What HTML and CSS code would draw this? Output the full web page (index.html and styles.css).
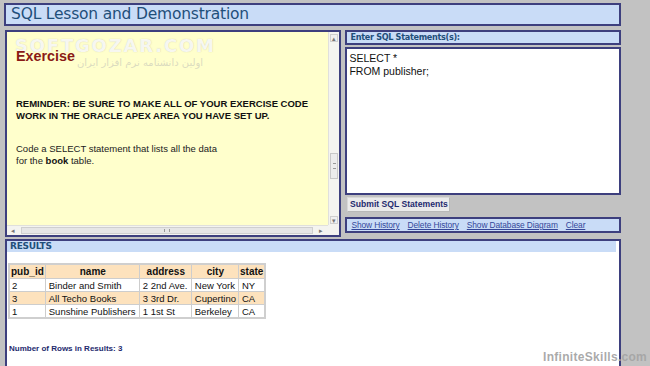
FILE: index.html
```html
<!DOCTYPE html>
<html>
<head>
<meta charset="utf-8">
<link rel="stylesheet" href="styles.css">
</head>
<body>
<div class="page">
  <div class="title">SQL Lesson and Demonstration</div>
  <div class="main">
    <div class="lesson">
      <div class="lesson-content">
        <div class="wm">SOFTGOZAR.COM<span class="wm-sub">اولین دانشنامه نرم افزار ایران</span></div>
        <h2 class="exercise">Exercise</h2>
        <p class="reminder">REMINDER: BE SURE TO MAKE ALL OF YOUR EXERCISE CODE<br>WORK IN THE ORACLE APEX AREA YOU HAVE SET UP.</p>
        <p class="task">Code a SELECT statement that lists all the data<br>for the <b>book</b> table.</p>
      </div>
      <div class="vscroll">
        <span class="arrow">&#9652;</span>
        <span class="vthumb"><span class="grip"></span></span>
        <span class="arrow">&#9662;</span>
      </div>
      <div class="hscroll">
        <span class="arrow">&#9666;</span>
        <span class="hthumb"><span class="hgrip"></span></span>
        <span class="arrow">&#9656;</span>
      </div>
      <div class="corner"></div>
    </div>
    <div class="sqlcol">
      <div class="sqlhead">Enter SQL Statements(s):</div>
      <div class="sqlbox">SELECT *<br>FROM publisher;</div>
      <div class="btnrow"><span class="submit">Submit SQL Statements</span></div>
      <div class="links">
        <a>Show History</a><a>Delete History</a><a>Show Database Diagram</a><a>Clear</a>
      </div>
    </div>
  </div>
  <div class="results">
    <div class="reshead">RESULTS</div>
    <table class="tbl">
      <tr><th class="c1">pub_id</th><th class="c2">name</th><th class="c3">address</th><th class="c4">city</th><th class="c5">state</th></tr>
      <tr><td>2</td><td>Binder and Smith</td><td>2 2nd Ave.</td><td>New York</td><td>NY</td></tr>
      <tr class="alt"><td>3</td><td>All Techo Books</td><td>3 3rd Dr.</td><td>Cupertino</td><td>CA</td></tr>
      <tr><td>1</td><td>Sunshine Publishers</td><td>1 1st St</td><td>Berkeley</td><td>CA</td></tr>
    </table>
    <div class="count">Number of Rows in Results: 3</div>
  </div>
  <div class="brand">InfiniteSkills.com</div>
</div>
</body>
</html>
```
FILE: styles.css
```css
html, body {
  margin: 0;
  padding: 0;
  background: #c2c2c2;
  width: 650px;
  height: 366px;
  overflow: hidden;
}
.page {
  position: relative;
  padding: 3px 0 0 4px;
  width: 617px;
  font-family: "Liberation Sans", Arial, sans-serif;
}
.title {
  box-sizing: border-box;
  height: 23px;
  background: #c9dcf7;
  border: 2px solid #3d3f7e;
  color: #1f4f7a;
  font-family: "DejaVu Sans", Tahoma, sans-serif;
  font-size: 15.5px;
  line-height: 19px;
  padding-left: 5px;
  letter-spacing: -0.2px;
}
.main {
  display: flex;
  gap: 4px;
  margin-top: 4px;
  margin-left: 1px;
}
.lesson {
  box-sizing: border-box;
  width: 337px;
  height: 207px;
  background: #ffffcc;
  border: 2px solid #3d3f7e;
  display: grid;
  grid-template-columns: 1fr 11px;
  grid-template-rows: 1fr 10px;
  overflow: hidden;
}
.lesson-content {
  position: relative;
  padding: 0 0 0 9px;
  overflow: hidden;
}
.wm {
  position: absolute;
  left: 8px;
  top: 4px;
  color: rgba(255, 255, 255, 0.85);
  font-family: "DejaVu Sans", sans-serif;
  font-weight: bold;
  font-size: 18px;
  line-height: 20px;
  letter-spacing: 1.8px;
  text-shadow: 0 0 1px rgba(180,180,150,0.7);
}
.wm-sub {
  display: block;
  font-size: 10px;
  line-height: 12px;
  letter-spacing: 0;
  font-weight: normal;
  direction: rtl;
  text-align: left;
  margin: 1px 0 0 62px;
  color: rgba(215, 215, 190, 0.9);
  text-shadow: none;
}
.exercise {
  position: relative;
  margin: 15px 0 0 0;
  color: #8a1a16;
  font-size: 14.3px;
  font-weight: bold;
  line-height: 18px;
}
.reminder {
  margin: 33px 0 0 0;
  font-size: 9.5px;
  font-weight: bold;
  line-height: 11.5px;
  color: #111;
}
.task {
  margin: 22px 0 0 0;
  font-size: 9.5px;
  line-height: 12px;
  color: #222;
}
.task b { color: #111; }
.vscroll {
  display: flex;
  flex-direction: column;
  align-items: center;
  background: #f4f4f0;
  border-left: 1px solid #e0e0dc;
  padding-top: 2px;
}
.arrow {
  font-size: 7px;
  line-height: 8px;
  color: #777;
  width: 8px;
  height: 8px;
  text-align: center;
  background: #f0f0f0;
  border: 1px solid #cfcfcf;
  box-sizing: border-box;
}
.vthumb {
  margin-top: 111px;
  width: 8px;
  height: 26px;
  background: #ececec;
  border: 1px solid #c8c8c8;
  box-sizing: border-box;
  display: flex;
  align-items: center;
  justify-content: center;
}
.grip { width: 3px; height: 4px; border-top: 1px solid #999; border-bottom: 1px solid #999; }
.vscroll .arrow:last-child { margin-top: auto; margin-bottom: 1px; }
.hscroll {
  display: flex;
  align-items: center;
  background: #f4f4f0;
  border-top: 1px solid #e0e0dc;
  padding: 0 3px 0 2px;
}
.hscroll .arrow { border: none; background: transparent; }
.hthumb {
  flex: 1;
  height: 7px;
  margin: 0 4px;
  background: #e6e6e6;
  border: 1px solid #cfcfcf;
  box-sizing: border-box;
  display: flex;
  justify-content: center;
  align-items: center;
}
.hgrip { width: 4px; height: 3px; border-left: 1px solid #999; border-right: 1px solid #999; }
.corner { background: #f4f4f0; }
.sqlcol {
  width: 276px;
  display: flex;
  flex-direction: column;
}
.sqlhead {
  box-sizing: border-box;
  height: 15px;
  background: #c9dcf7;
  border: 2px solid #3d3f7e;
  color: #1f4f7a;
  font-family: "DejaVu Sans Condensed", "DejaVu Sans", Tahoma, sans-serif;
  font-stretch: condensed;
  font-size: 9px;
  font-weight: bold;
  line-height: 11px;
  padding-left: 3px;
  letter-spacing: -0.3px;
}
.sqlbox {
  box-sizing: border-box;
  margin-top: 2px;
  height: 148px;
  background: #fff;
  border: 2px solid #3d3f7e;
  padding: 3px 0 0 2px;
  font-size: 10.5px;
  line-height: 12.5px;
  color: #111;
}
.btnrow {
  display: flex;
  margin-top: 2px;
  padding-left: 2px;
  height: 15px;
}
.submit {
  display: block;
  box-sizing: border-box;
  width: 103px;
  height: 15px;
  background: #ebebeb;
  border: 1px solid #d8d8d8;
  border-right-color: #b8b8b8;
  border-bottom-color: #b8b8b8;
  color: #1e2a6e;
  font-size: 8.6px;
  font-weight: bold;
  line-height: 13px;
  text-align: center;
}
.links {
  box-sizing: border-box;
  margin-top: 5px;
  height: 16px;
  background: #c9dcf7;
  border: 2px solid #3d3f7e;
  display: flex;
  gap: 8px;
  padding-left: 4px;
  align-items: center;
}
.links a {
  color: #34479a;
  font-size: 8.4px;
  text-decoration: underline;
  letter-spacing: -0.1px;
}
.results {
  box-sizing: border-box;
  margin: 2px 0 0 1px;
  width: 616px;
  height: 140px;
  background: #fff;
  border: 2px solid #3d3f7e;
  padding-top: 0;
}
.reshead {
  width: 606px;
  height: 11px;
  background: #c9dcf7;
  color: #1f4f7a;
  font-family: "DejaVu Sans", Tahoma, sans-serif;
  font-weight: bold;
  font-size: 9px;
  line-height: 11px;
  padding-left: 3px;
  letter-spacing: -0.3px;
}
.tbl {
  margin: 11px 0 0 1px;
  border-collapse: collapse;
  border: 2px solid #cfcfcf;
  font-size: 9.5px;
  line-height: 11px;
  color: #111;
}
.tbl th, .tbl td {
  border: 1px solid #cdcdcd;
  height: 12px;
  padding: 0 2px 0 3px;
  white-space: nowrap;
}
.tbl th {
  background: #fde2bd;
  font-size: 10px;
  font-weight: bold;
  text-align: center;
  height: 13px;
}
.tbl th.c1 { text-align: left; width: 30px; padding: 0 1px; }
.tbl th.c2 { width: 88px; }
.tbl th.c3 { width: 46px; }
.tbl th.c4 { width: 40px; }
.tbl th.c5 { width: 23px; padding: 0 1px; }
.tbl td:first-child { padding-left: 2px; }
.tbl tr.alt td { background: #fde2bd; }
.count {
  margin: 25px 0 0 2px;
  font-size: 8px;
  font-weight: bold;
  color: #1e2a6e;
}
.brand {
  position: absolute;
  left: 543px;
  top: 350px;
  font-family: "Liberation Sans", Arial, sans-serif;
  font-size: 12px;
  font-weight: bold;
  color: rgba(165, 165, 165, 0.95);
  letter-spacing: 0.3px;
}
```
